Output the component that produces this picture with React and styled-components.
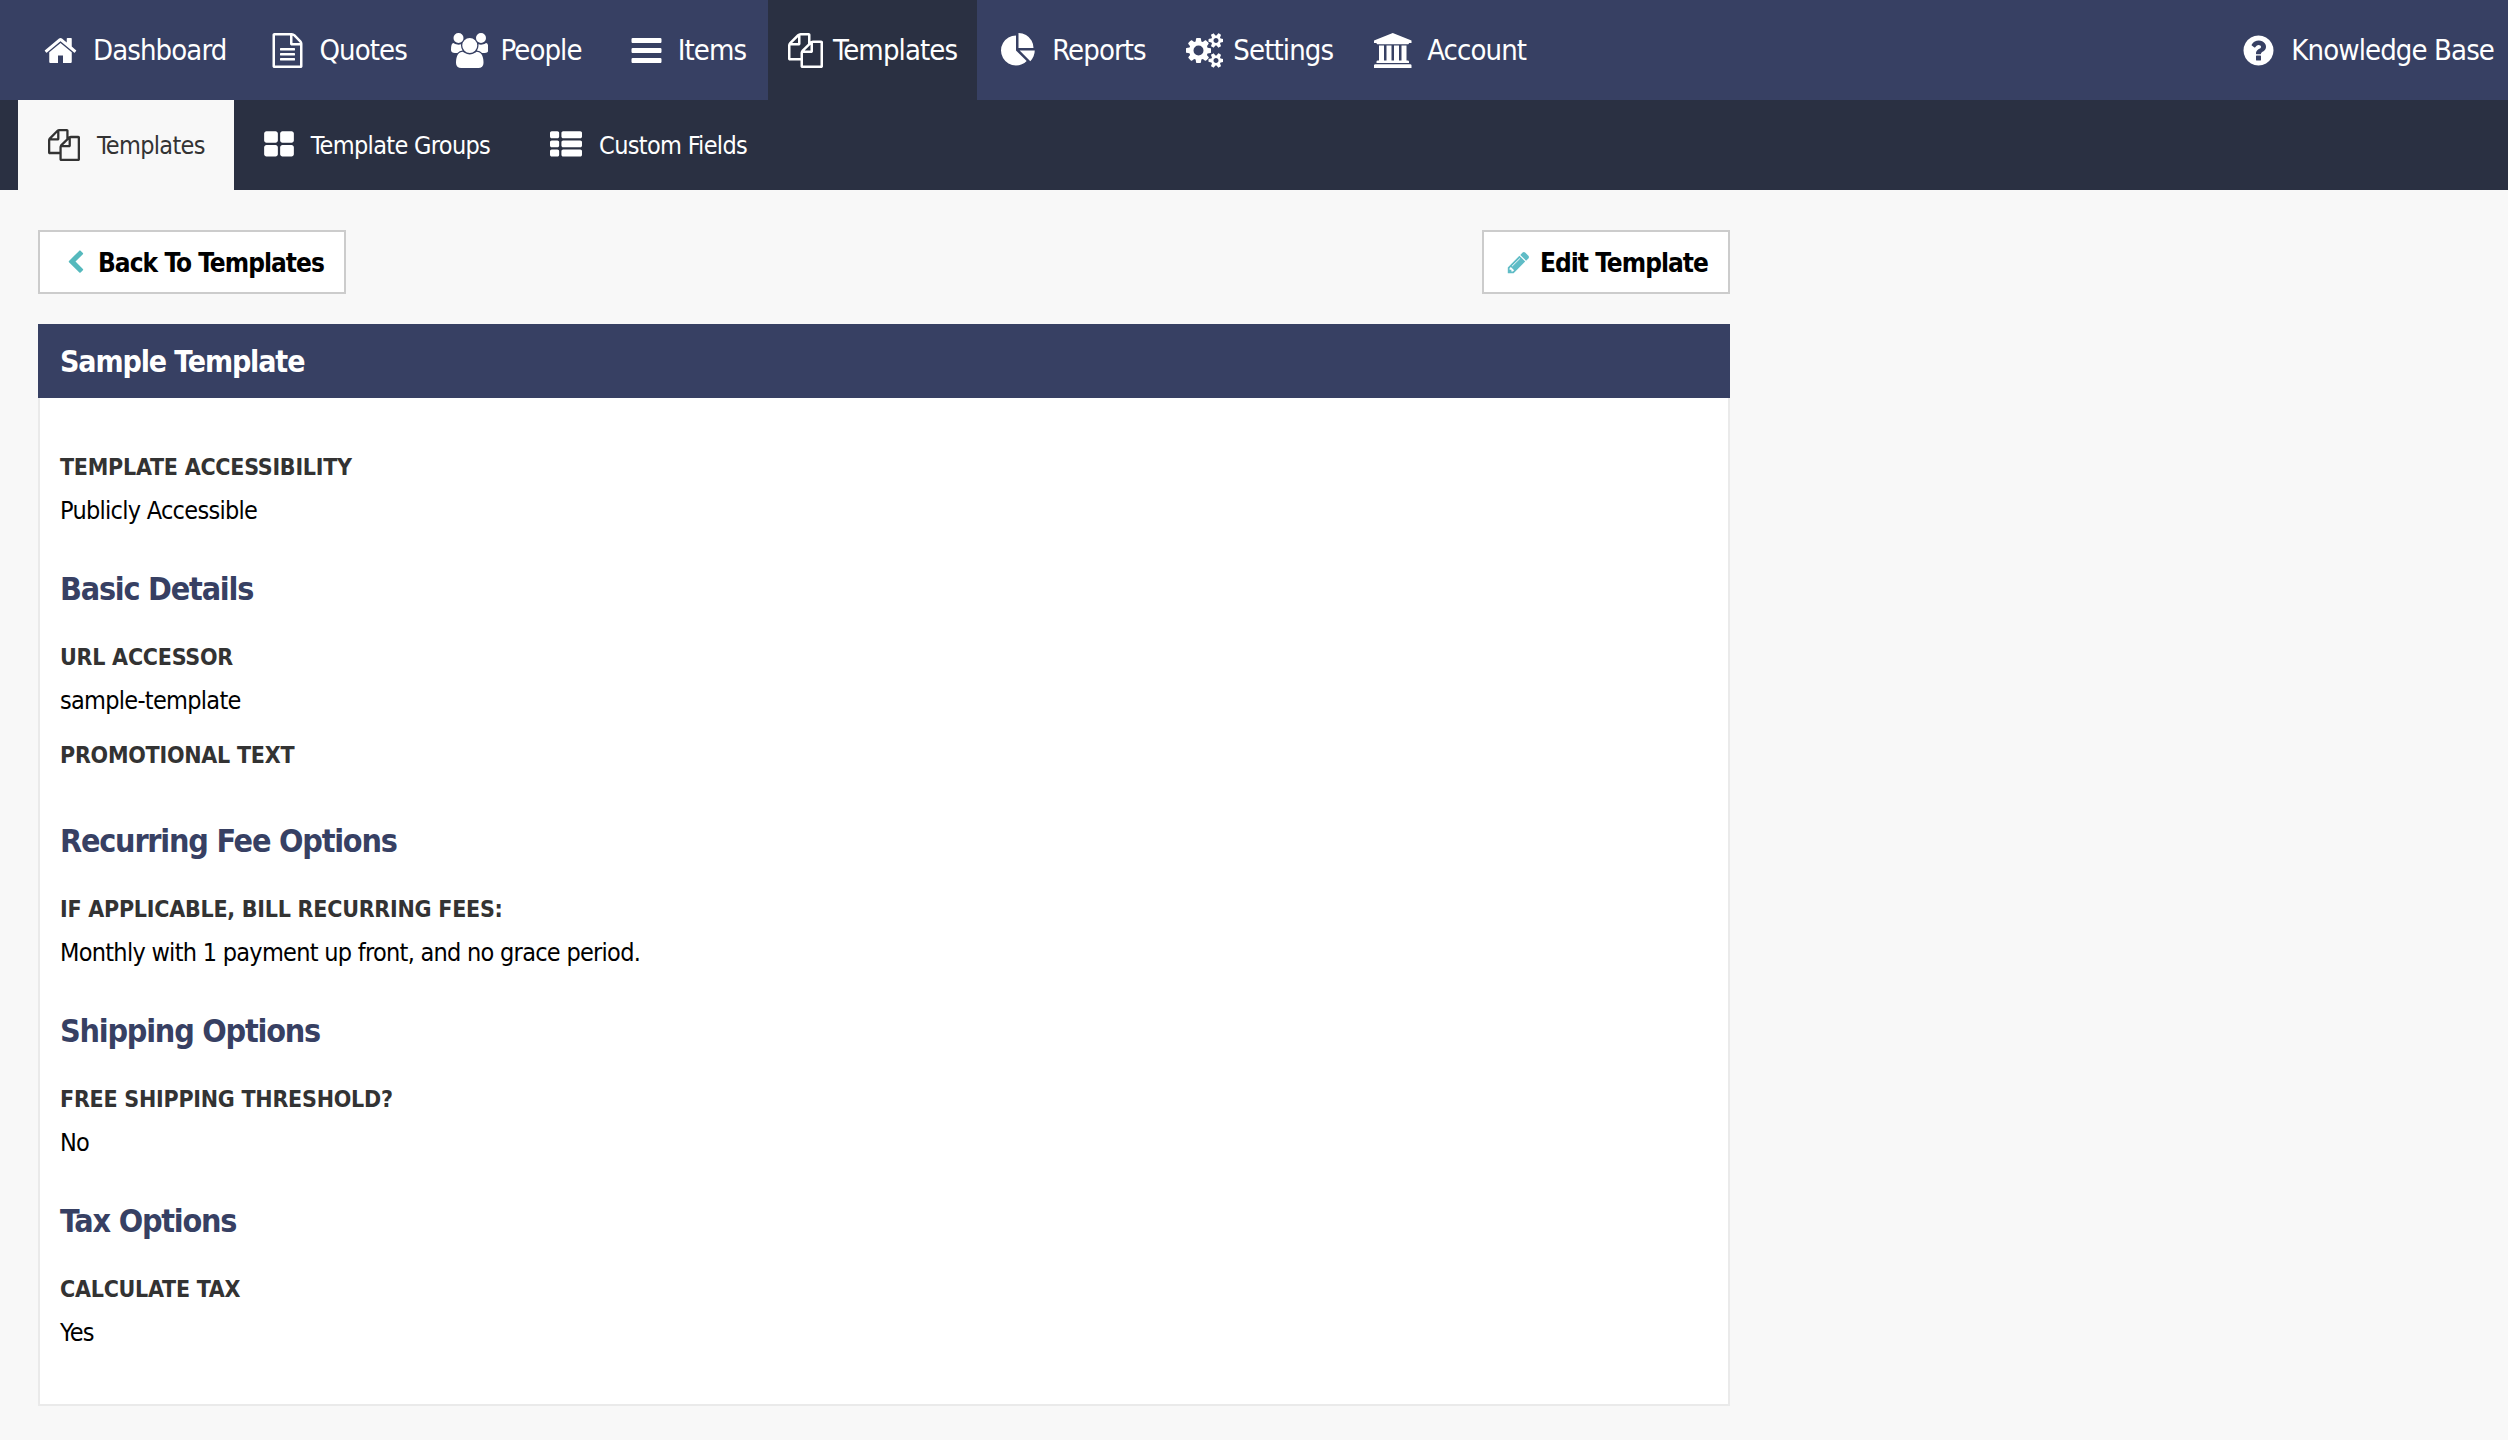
import React from "react";
import styled, { createGlobalStyle } from "styled-components";

const Global = createGlobalStyle`
  html, body { margin: 0; padding: 0; background: #f8f8f8; }
  body { font-family: "DejaVu Sans Condensed", "DejaVu Sans", sans-serif; font-stretch: condensed; color: #000; }
`;

const TopBar = styled.nav`
  display: flex; align-items: stretch; height: 100px; background: #374063; padding-left: 21px;
`;
const TopItem = styled.a`
  display: flex; align-items: center; gap: ${p => p.$gap}px;
  padding: 0 ${p => p.$r ?? 22}px 0 ${p => p.$l ?? 22}px;
  color: #fff; font-size: 29px; letter-spacing: -0.9px;
  background: ${p => (p.$active ? "#2a3042" : "transparent")};
  svg { flex: none; }
`;
const Spacer = styled.div`flex: 1;`;
const SubBar = styled.nav`
  display: flex; align-items: stretch; height: 90px; background: #2a3042; padding-left: 18px;
`;
const SubItem = styled.a`
  display: flex; align-items: center; gap: ${p => p.$gap ?? 16}px;
  padding: 0 29px 0 ${p => p.$l ?? 29}px;
  font-size: 25px; letter-spacing: -0.68px; color: ${p => (p.$active ? "#333" : "#fff")};
  background: ${p => (p.$active ? "#f8f8f8" : "transparent")};
  svg { flex: none; }
`;
const Main = styled.main`width: 1692px; margin-left: 38px; padding-top: 40px;`;
const Actions = styled.div`display: flex; justify-content: space-between; margin-bottom: 30px;`;
const Button = styled.a`
  display: flex; align-items: center; gap: ${p => p.$gap}px; height: 64px; box-sizing: border-box;
  padding: 1px 20px 0 ${p => p.$l}px; background: #fff; border: 2px solid #ccc;
  font-size: 26px; font-weight: 700; letter-spacing: -0.95px; color: #000;
  svg { flex: none; margin-top: -1px; }
`;
const TitleBar = styled.h1`
  margin: 0; height: 74px; line-height: 75px; padding-left: 22px; background: #374063;
  color: #fff; font-size: 30px; font-weight: 700; letter-spacing: -1.1px;
`;
const Card = styled.section`
  background: #fff; border: 2px solid #eaeaea; border-top: 0; padding: 53px 20px 55px;
`;
const SectionTitle = styled.h2`
  margin: ${p => p.$top ?? 42}px 0 0; font-size: 32px; line-height: 40px; font-weight: 700;
  letter-spacing: -1.22px; color: #374063;
`;
const Label = styled.div`
  margin-top: ${p => p.$top ?? 32}px; font-size: 23px; line-height: 32px; font-weight: 700;
  letter-spacing: -0.25px; color: #333;
`;
const Value = styled.div`margin-top: 12px; font-size: 25px; line-height: 32px; letter-spacing: -0.72px; color: #000;`;

const paths = {
  home: [1792, "M1472 992v480q0 26-19 45t-45 19h-384v-384h-256v384h-384q-26 0-45-19t-19-45v-480q0-1 .5-3t.5-3l575-474 575 474q1 2 1 6zm223-69l-62 74q-8 9-21 11h-3q-13 0-21-7l-692-577-692 577q-12 8-24 7-13-2-21-11l-62-74q-8-10-7-23.500t11-21l719-599q32-26 76-26t76 26l244 204v-195q0-14 9-23t23-9h192q14 0 23 9t9 23v408l219 182q10 8 11 21.500t-7 23.500z"],
  file: [1792, "M1596 380q28 28 48 76t20 88v1152q0 40-28 68t-68 28h-1344q-40 0-68-28t-28-68v-1600q0-40 28-68t68-28h896q40 0 88 20t76 48zm-444-244v376h376q-10-29-22-41l-313-313q-12-12-41-22zm384 1528v-1024h-416q-40 0-68-28t-28-68v-416h-768v1536h1280zm-1024-864q0-14 9-23t23-9h704q14 0 23 9t9 23v64q0 14-9 23t-23 9h-704q-14 0-23-9t-9-23v-64zm736 224q14 0 23 9t9 23v64q0 14-9 23t-23 9h-704q-14 0-23-9t-9-23v-64q0-14 9-23t23-9h704zm0 256q14 0 23 9t9 23v64q0 14-9 23t-23 9h-704q-14 0-23-9t-9-23v-64q0-14 9-23t23-9h704z"],
  users: [1920, "M593 896q-162 5-265 128h-134q-82 0-138-40.500t-56-118.500q0-353 124-353 6 0 43.500 21t97.500 42.500 119 21.500q67 0 133-23-5 37-5 66 0 139 81 256zm1071 637q0 120-73 189.500t-194 69.500h-874q-121 0-194-69.500t-73-189.500q0-53 3.500-103.500t14-109 26.500-108.500 43-97.500 62-81 85.500-53.500 111.500-20q10 0 43 21.500t73 48 107 48 135 21.500 135-21.500 107-48 73-48 43-21.500q61 0 111.500 20t85.500 53.500 62 81 43 97.500 26.500 108.500 14 109 3.500 103.500zm-1024-1277q0 106-75 181t-181 75-181-75-75-181 75-181 181-75 181 75 75 181zm704 384q0 159-112.500 271.500t-271.500 112.500-271.500-112.500-112.500-271.500 112.500-271.500 271.500-112.500 271.500 112.500 112.500 271.500zm576 225q0 78-56 118.500t-138 40.500h-134q-103-123-265-128 81-117 81-256 0-29-5-66 66 23 133 23 59 0 119-21.500t97.500-42.500 43.500-21q124 0 124 353zm-128-609q0 106-75 181t-181 75-181-75-75-181 75-181 181-75 181 75 75 181z"],
  bars: [1792, "M1664 1344v128q0 26-19 45t-45 19h-1408q-26 0-45-19t-19-45v-128q0-26 19-45t45-19h1408q26 0 45 19t19 45zm0-512v128q0 26-19 45t-45 19h-1408q-26 0-45-19t-19-45v-128q0-26 19-45t45-19h1408q26 0 45 19t19 45zm0-512v128q0 26-19 45t-45 19h-1408q-26 0-45-19t-19-45v-128q0-26 19-45t45-19h1408q26 0 45 19t19 45z"],
  files: [1792, "M1696 384q40 0 68 28t28 68v1216q0 40-28 68t-68 28h-960q-40 0-68-28t-28-68v-288h-544q-40 0-68-28t-28-68v-672q0-40 20-88t48-76l408-408q28-28 76-48t88-20h416q40 0 68 28t28 68v328q68-40 128-40h416zm-544 213l-299 299h299v-299zm-640-384l-299 299h299v-299zm196 647l316-316v-416h-384v416q0 40-28 68t-68 28h-416v640h512v-256q0-40 20-88t48-76zm956 804v-1152h-384v416q0 40-28 68t-68 28h-416v640h896z"],
  pie: [1792, "M768 890l546 546q-106 108-247.500 168t-298.500 60q-209 0-385.500-103t-279.500-279.500-103-385.500 103-385.500 279.500-279.500 385.500-103v762zm187 6h773q0 157-60 298.500t-168 247.500zm709-128h-768v-768q209 0 385.500 103t279.500 279.500 103 385.500z"],
  cogs: [1920, "M896 896q0-106-75-181t-181-75-181 75-75 181 75 181 181 75 181-75 75-181zm768 512q0-52-38-90t-90-38-90 38-38 90q0 53 37.500 90.500t90.500 37.500 90.500-37.500 37.500-90.500zm0-1024q0-52-38-90t-90-38-90 38-38 90q0 53 37.500 90.500t90.500 37.500 90.500-37.500 37.500-90.500zm-384 421v185q0 10-7 19.500t-16 10.500l-155 24q-11 35-32 76 34 48 90 115 7 11 7 20 0 12-7 19-23 30-82.500 89.500t-78.500 59.500q-11 0-21-7l-115-90q-37 19-77 31-11 108-23 155-7 24-30 24h-186q-11 0-20-7.500t-10-17.500l-23-153q-34-10-75-31l-118 89q-7 7-20 7-11 0-21-8-144-133-144-160 0-9 7-19 10-14 41-53t47-61q-23-44-35-82l-152-24q-10-1-17-9.500t-7-19.500v-185q0-10 7-19.500t16-10.500l155-24q11-35 32-76-34-48-90-115-7-11-7-20 0-12 7-20 22-30 82-89t79-59q11 0 21 7l115 90q34-18 77-32 11-108 23-154 7-24 30-24h186q11 0 20 7.500t10 17.500l23 153q34 10 75 31l118-89q8-7 20-7 11 0 21 8 144 133 144 160 0 8-7 19-12 16-42 54t-45 60q23 48 34 82l152 23q10 2 17 10.500t7 19.500zm640 533v140q0 16-149 31-12 27-30 52 51 113 51 138 0 4-4 7-122 71-124 71-8 0-46-47t-52-68q-20 2-30 2t-30-2q-14 21-52 68t-46 47q-2 0-124-71-4-3-4-7 0-25 51-138-18-25-30-52-149-15-149-31v-140q0-16 149-31 13-29 30-52-51-113-51-138 0-4 4-7 4-2 35-20t59-34 30-16q8 0 46 46.500t52 67.500q20-2 30-2t30 2q51-71 92-112l6-2q4 0 124 70 4 3 4 7 0 25-51 138 17 23 30 52 149 15 149 31zm0-1024v140q0 16-149 31-12 27-30 52 51 113 51 138 0 4-4 7-122 71-124 71-8 0-46-47t-52-68q-20 2-30 2t-30-2q-14 21-52 68t-46 47q-2 0-124-71-4-3-4-7 0-25 51-138-18-25-30-52-149-15-149-31v-140q0-16 149-31 13-29 30-52-51-113-51-138 0-4 4-7 4-2 35-20t59-34 30-16q8 0 46 46.500t52 67.500q20-2 30-2t30 2q51-71 92-112l6-2q4 0 124 70 4 3 4 7 0 25-51 138 17 23 30 52 149 15 149 31z"],
  bank: [2048, "M960 0l960 384v128h-128q0 26-20.500 45t-48.500 19h-1526q-28 0-48.500-19t-20.500-45h-128v-128zm-704 640h256v768h128v-768h256v768h128v-768h256v768h128v-768h256v768h59q28 0 48.500 19t20.500 45v64h-1664v-64q0-26 20.500-45t48.500-19h59v-768zm1595 960q28 0 48.500 19t20.500 45v128h-1920v-128q0-26 20.500-45t48.500-19h1782z"],
  help: [1792, "M1024 1376v-192q0-14-9-23t-23-9h-192q-14 0-23 9t-9 23v192q0 14 9 23t23 9h192q14 0 23-9t9-23zm256-672q0-88-55.500-163t-138.500-116-170-41q-243 0-371 213-15 24 8 42l132 100q7 6 19 6 16 0 25-12 53-68 86-92 34-24 86-24 48 0 85.500 26t37.500 59q0 38-20 61t-68 45q-63 28-115.500 86.500t-52.500 125.500v36q0 14 9 23t23 9h192q14 0 23-9t9-23q0-19 21.500-49.500t54.500-49.500q32-18 49-28.500t46-35 44.500-48 28-60.500 12.500-81zm384 192q0 209-103 385.500t-279.500 279.500-385.500 103-385.500-103-279.500-279.500-103-385.500 103-385.500 279.500-279.500 385.500-103 385.500 103 279.500 279.500 103 385.500z"],
  large: [1792, "M832 1024v384q0 52-38 90t-90 38h-512q-52 0-90-38t-38-90v-384q0-52 38-90t90-38h512q52 0 90 38t38 90zm0-768v384q0 52-38 90t-90 38h-512q-52 0-90-38t-38-90v-384q0-52 38-90t90-38h512q52 0 90 38t38 90zm896 768v384q0 52-38 90t-90 38h-512q-52 0-90-38t-38-90v-384q0-52 38-90t90-38h512q52 0 90 38t38 90zm0-768v384q0 52-38 90t-90 38h-512q-52 0-90-38t-38-90v-384q0-52 38-90t90-38h512q52 0 90 38t38 90z"],
  list: [1792, "M512 1248v192q0 40-28 68t-68 28h-320q-40 0-68-28t-28-68v-192q0-40 28-68t68-28h320q40 0 68 28t28 68zm0-512v192q0 40-28 68t-68 28h-320q-40 0-68-28t-28-68v-192q0-40 28-68t68-28h320q40 0 68 28t28 68zm1280 512v192q0 40-28 68t-68 28h-960q-40 0-68-28t-28-68v-192q0-40 28-68t68-28h960q40 0 68 28t28 68zm-1280-1024v192q0 40-28 68t-68 28h-320q-40 0-68-28t-28-68v-192q0-40 28-68t68-28h320q40 0 68 28t28 68zm1280 512v192q0 40-28 68t-68 28h-960q-40 0-68-28t-28-68v-192q0-40 28-68t68-28h960q40 0 68 28t28 68zm0-512v192q0 40-28 68t-68 28h-960q-40 0-68-28t-28-68v-192q0-40 28-68t68-28h960q40 0 68 28t28 68z"],
  chevron: [1792, "M1427 301l-531 531 531 531q19 19 19 45t-19 45l-166 166q-19 19-45 19t-45-19l-742-742q-19-19-19-45t19-45l742-742q19-19 45-19t45 19l166 166q19 19 19 45t-19 45z"],
  pencil: [1792, "M491 1536l91-91-235-235-91 91v107h128v128h107zm523-928q0-22-22-22-10 0-17 7l-542 542q-7 7-7 17 0 22 22 22 10 0 17-7l542-542q7-7 7-17zm-54-192l416 416-832 832h-416v-416zm683 96q0 53-37 90l-166 166-416-416 166-165q36-38 90-38 53 0 91 38l235 234q37 39 37 91z"],
};

const Icon = ({ name, size, color = "currentColor" }) => {
  const [w, d] = paths[name];
  return (
    <svg width={(size * w) / 1792} height={size} viewBox={`0 0 ${w} 1792`} fill={color}>
      <path d={d} />
    </svg>
  );
};

const left = [
  { name: "home", label: "Dashboard", gap: 15 },
  { name: "file", label: "Quotes", gap: 14, r: 22 },
  { name: "users", label: "People", gap: 12, l: 22 },
  { name: "bars", label: "Items", gap: 14, l: 25, r: 22 },
  { name: "files", label: "Templates", gap: 10, l: 20, r: 20 },
  { name: "pie", label: "Reports", gap: 16, l: 24, r: 20 },
  { name: "cogs", label: "Settings", gap: 10, l: 20, r: 20 },
  { name: "bank", label: "Account", gap: 13, l: 21 },
];

const Field = ({ label, value, top }) => (
  <>
    <Label $top={top}>{label}</Label>
    {value && <Value>{value}</Value>}
  </>
);

export default function App() {
  return (
    <>
      <Global />
      <TopBar>
        {left.map(t => (
          <TopItem key={t.label} $gap={t.gap} $l={t.l} $r={t.r} $active={t.label === "Templates"}>
            <Icon name={t.name} size={35} />
            <span>{t.label}</span>
          </TopItem>
        ))}
        <Spacer />
        <TopItem $gap={15} $l={14} $r={14}><Icon name="help" size={35} /><span>Knowledge Base</span></TopItem>
      </TopBar>
      <SubBar>
        <SubItem $active $l={30} $gap={17}><Icon name="files" size={32} /><span>Templates</span></SubItem>
        <SubItem $gap={16}><Icon name="large" size={32} /><span>Template Groups</span></SubItem>
        <SubItem $l={31} $gap={17}><Icon name="list" size={32} /><span>Custom Fields</span></SubItem>
      </SubBar>
      <Main>
        <Actions>
          <Button $l={23} $gap={10}><Icon name="chevron" size={25} color="#55b9bd" /><span>Back To Templates</span></Button>
          <Button $l={22} $gap={9}><Icon name="pencil" size={25} color="#5fbcc6" /><span>Edit Template</span></Button>
        </Actions>
        <TitleBar>Sample Template</TitleBar>
        <Card>
          <Field top={0} label="TEMPLATE ACCESSIBILITY" value="Publicly Accessible" />
          <SectionTitle>Basic Details</SectionTitle>
          <Field label="URL ACCESSOR" value="sample-template" />
          <Field top={22} label="PROMOTIONAL TEXT" />
          <SectionTitle $top={50}>Recurring Fee Options</SectionTitle>
          <Field label="IF APPLICABLE, BILL RECURRING FEES:" value="Monthly with 1 payment up front, and no grace period." />
          <SectionTitle>Shipping Options</SectionTitle>
          <Field label="FREE SHIPPING THRESHOLD?" value="No" />
          <SectionTitle>Tax Options</SectionTitle>
          <Field label="CALCULATE TAX" value="Yes" />
        </Card>
      </Main>
    </>
  );
}
